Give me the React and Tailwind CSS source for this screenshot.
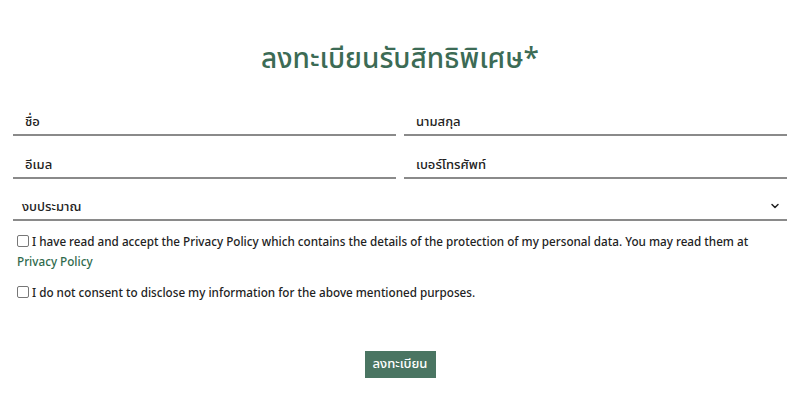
import { ChevronDown } from 'lucide-react';

const font = { fontFamily: '"Noto Sans Thai", "Noto Sans", "Noto Sans CJK SC", sans-serif' };

function Field({ label }) {
  return (
    <div className="flex-1 border-b-2 border-[#8a8a8a] h-[37px] flex items-end pb-[5px] pl-[12px]">
      <span className="text-[13px] font-medium text-[#222] leading-none">{label}</span>
    </div>
  );
}

export default function App() {
  return (
    <div className="w-[800px] h-[417px] bg-white px-[13px] pt-[43px]" style={font}>
      <h1 className="text-center text-[28px] font-medium leading-[34px] text-[#3c6b55] mb-[22px]">ลงทะเบียนรับสิทธิพิเศษ*</h1>

      <div className="flex gap-[8px]">
        <Field label="ชื่อ" />
        <Field label="นามสกุล" />
      </div>
      <div className="flex gap-[8px] mt-[6px]">
        <Field label="อีเมล" />
        <Field label="เบอร์โทรศัพท์" />
      </div>
      <div className="mt-[5px] border-b-2 border-[#8a8a8a] h-[37px] flex items-end justify-between pb-[5px] pl-[9px] pr-[6px]">
        <span className="text-[13px] font-medium text-[#222] leading-none">งบประมาณ</span>
        <ChevronDown className="w-[12px] h-[12px] text-[#222] mb-[2px]" strokeWidth={3} />
      </div>

      <div className="mt-[12px] pl-[4px] text-[11.7px] font-medium text-[#222] leading-[20px]">
        <div>
          <span className="inline-block w-[12px] h-[12px] border border-[#777] rounded-[2px] align-[-1px] mr-[3px]" />
          I have read and accept the Privacy Policy which contains the details of the protection of my personal data. You may read them at
          <div className="text-[#2f6a4c]">Privacy Policy</div>
        </div>
        <div className="mt-[11px]">
          <span className="inline-block w-[12px] h-[12px] border border-[#777] rounded-[2px] align-[-1px] mr-[3px]" />
          I do not consent to disclose my information for the above mentioned purposes.
        </div>
      </div>

      <div className="flex justify-center mt-[47px]">
        <button className="bg-[#4a7562] text-white text-[13px] font-medium h-[27px] w-[71px] whitespace-nowrap">ลงทะเบียน</button>
      </div>
    </div>
  );
}
